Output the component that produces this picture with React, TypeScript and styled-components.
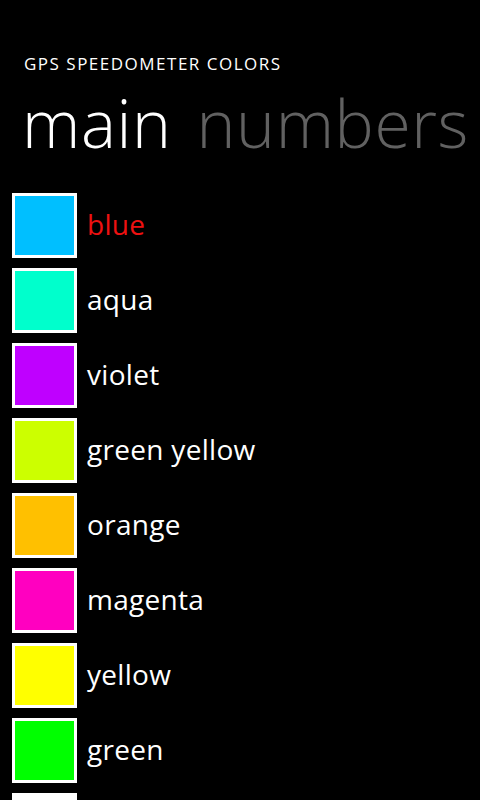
import React from 'react';
import styled, { createGlobalStyle } from 'styled-components';

const GlobalStyle = createGlobalStyle`
	html, body {
		margin: 0;
		padding: 0;
		background: #000;
		overflow: hidden;
	}
	body {
		font-family: "Open Sans", "Noto Sans", sans-serif;
		color: #fff;
	}
`;

interface ColorItem {
	name: string;
	hex: string;
}

const COLORS: ColorItem[] = [
	{ name: 'blue', hex: '#00bfff' },
	{ name: 'aqua', hex: '#00ffcc' },
	{ name: 'violet', hex: '#bf00ff' },
	{ name: 'green yellow', hex: '#ccff00' },
	{ name: 'orange', hex: '#ffc000' },
	{ name: 'magenta', hex: '#ff00c0' },
	{ name: 'yellow', hex: '#ffff00' },
	{ name: 'green', hex: '#00ff00' },
	{ name: 'white', hex: '#ffffff' },
];

const Page = styled.div`
	width: 480px;
	height: 800px;
	overflow: hidden;
	background: #000;
`;

const AppTitle = styled.div`
	padding: 54px 0 0 24px;
	font-size: 17px;
	line-height: 20px;
	letter-spacing: 1.5px;
`;

const PivotHeaders = styled.div`
	display: flex;
	gap: 25px;
	padding: 8px 0 0 22px;
	white-space: nowrap;
`;

const PivotHeader = styled.span<{ $active?: boolean }>`
	font-size: 66px;
	line-height: 80px;
	font-weight: 300;
	letter-spacing: 0.6px;
	color: ${(p) => (p.$active ? '#fff' : '#616161')};
`;

const List = styled.div`
	display: flex;
	flex-direction: column;
	gap: 10px;
	padding: 31px 0 0 12px;
`;

const Row = styled.div`
	display: flex;
	align-items: center;
	gap: 10px;
`;

const Swatch = styled.div<{ $color: string }>`
	width: 59px;
	height: 59px;
	border: 3px solid #fff;
	background: ${(p) => p.$color};
	flex-shrink: 0;
`;

const ColorName = styled.span<{ $selected?: boolean }>`
	font-size: 28px;
	line-height: 32px;
	letter-spacing: 0.3px;
	color: ${(p) => (p.$selected ? '#ee1111' : '#fff')};
	padding-bottom: 4px;
`;

const App = () => {
	return (
		<Page>
			<GlobalStyle />
			<AppTitle>GPS SPEEDOMETER COLORS</AppTitle>
			<PivotHeaders>
				<PivotHeader $active>main</PivotHeader>
				<PivotHeader>numbers</PivotHeader>
			</PivotHeaders>
			<List>
				{COLORS.map((c, index) => (
					<Row key={c.name}>
						<Swatch $color={c.hex} />
						<ColorName $selected={index === 0}>{c.name}</ColorName>
					</Row>
				))}
			</List>
		</Page>
	);
};

export default App;
